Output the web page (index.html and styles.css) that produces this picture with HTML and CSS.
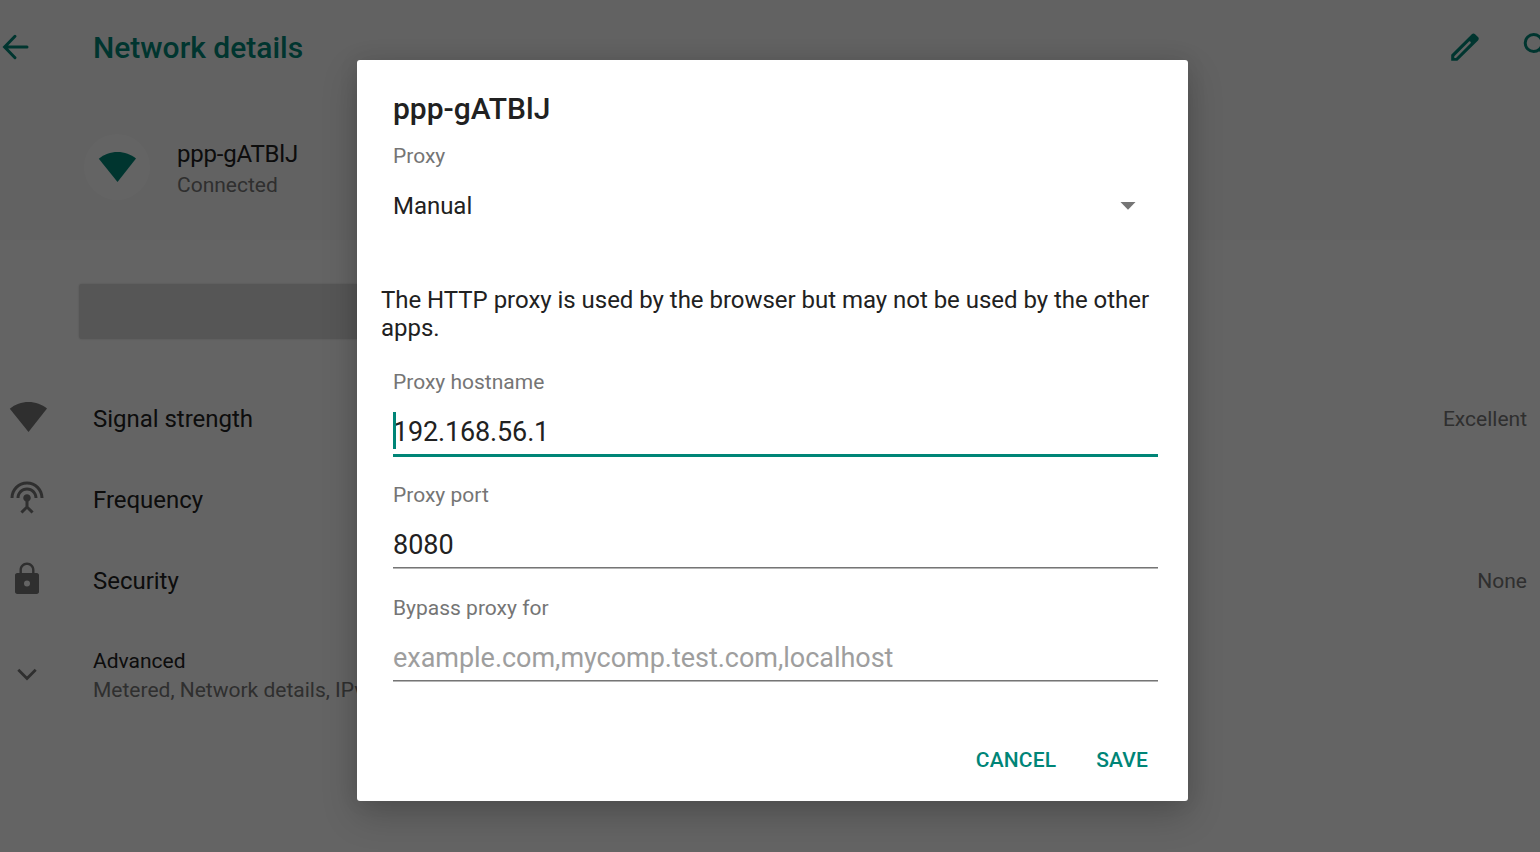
FILE: index.html
```html
<!DOCTYPE html>
<html lang="en">
<head>
<meta charset="utf-8">
<title>Network details</title>
<link rel="stylesheet" href="styles.css">
</head>
<body>
<div class="page">
  <header class="bar">
    <svg class="back" viewBox="0 0 36 36"><path d="M27 18H5M15 7.300L4.600 18 15 28.700" fill="none" stroke="currentColor" stroke-width="3" stroke-linecap="round"/></svg>
    <h1 class="bar-title">Network details</h1>
    <svg class="edit" viewBox="0 0 36 36"><path fill="currentColor" fill-rule="evenodd" d="M4.200 25.800V31.800h6.200L31 11.400c1-1 1-2.300 0-3.300L28.100 5.200c-1-1-2.300-1-3.300 0zM7.300 28.900v-1.700L22 12.600c.9-.9 2.500.7 1.600 1.600L9 28.900z"/></svg>
    <svg class="search" viewBox="0 0 36 36"><circle cx="14.700" cy="14" r="8.500" fill="none" stroke="currentColor" stroke-width="3"/><path d="M20.500 20.500L30 30" stroke="currentColor" stroke-width="3"/></svg>
  </header>
  <section class="hero">
    <div class="badge"><svg class="wifi" viewBox="0 0 38 30"><path fill="currentColor" d="M.8 6.800C6 2.500 12.500.1 19.500.1s13.500 2.400 18.500 6.500L19.500 30z"/></svg></div>
    <div>
      <div class="name">ppp-gATBlJ</div>
      <div class="sub">Connected</div>
    </div>
  </section>
  <main class="content">
    <div class="action"></div>
    <div class="list">
      <div class="row">
        <span class="icon"><svg class="wifi signal" viewBox="0 0 38 30"><path fill="currentColor" d="M.8 6.800C6 2.500 12.500.1 19.500.1s13.500 2.400 18.500 6.500L19.500 30z"/></svg></span>
        <span class="label">Signal strength</span><span class="value">Excellent</span>
      </div>
      <div class="row">
        <span class="icon"><svg class="glyph" viewBox="0 0 24 24"><path fill="currentColor" d="M12 5c-3.870 0-7 3.130-7 7h2c0-2.760 2.240-5 5-5s5 2.240 5 5h2c0-3.870-3.130-7-7-7zm1 9.290c.88-.39 1.500-1.260 1.500-2.290 0-1.380-1.120-2.500-2.500-2.500S9.500 10.620 9.500 12c0 1.020.62 1.900 1.500 2.290v3.300L7.590 21 9 22.410l3-3 3 3L16.410 21 13 17.590v-3.300zM12 1C5.930 1 1 5.930 1 12h2c0-4.970 4.030-9 9-9s9 4.030 9 9h2c0-6.070-4.930-11-11-11z"/></svg></span>
        <span class="label">Frequency</span>
      </div>
      <div class="row">
        <span class="icon"><svg class="glyph" viewBox="0 0 24 24"><path fill="currentColor" fill-rule="evenodd" d="M18.500 8H17V6c0-2.760-2.240-5-5-5S7 3.240 7 6v2H5.500C4.670 8 4 8.670 4 9.500v11c0 .83.67 1.500 1.500 1.500h13c.83 0 1.500-.67 1.500-1.500v-11c0-.83-.67-1.500-1.500-1.500zM12 17a2 2 0 1 1 0-4 2 2 0 0 1 0 4zM8.600 8V6c0-1.880 1.520-3.400 3.400-3.400s3.400 1.520 3.400 3.400v2z"/></svg></span>
        <span class="label">Security</span><span class="value">None</span>
      </div>
      <div class="row advanced">
        <span class="icon"><svg class="chevron" viewBox="0 0 36 36"><path d="M9.300 13.700L18 22.400l8.700-8.700" fill="none" stroke="currentColor" stroke-width="2.800"/></svg></span>
        <div>
          <div class="adv-title">Advanced</div>
          <div class="sub">Metered, Network details, IPv6 details</div>
        </div>
      </div>
    </div>
  </main>
</div>
<div class="scrim"></div>
<div class="dialog" role="dialog">
  <h2 class="dialog-title">ppp-gATBlJ</h2>
  <div class="caption">Proxy</div>
  <div class="select"><span>Manual</span><svg class="caret" viewBox="0 0 16 8"><path d="M.5 0h15L8 7.700z" fill="#757575"/></svg></div>
  <p class="note">The HTTP proxy is used by the browser but may not be used by the other apps.</p>
  <div class="field"><div class="caption">Proxy hostname</div><div class="input focused">192.168.56.1</div></div>
  <div class="field"><div class="caption">Proxy port</div><div class="input">8080</div></div>
  <div class="field"><div class="caption">Bypass proxy for</div><div class="input hint">example.com,mycomp.test.com,localhost</div></div>
  <div class="actions"><span class="button">CANCEL</span><span class="button">SAVE</span></div>
</div>
</body>
</html>
```
FILE: styles.css
```css
* { box-sizing: border-box; }
html, body { margin: 0; height: 100%; overflow: hidden; }
body {
  position: relative;
  font-family: Roboto, "Liberation Sans", sans-serif;
  font-size: 24px;
  letter-spacing: -.03px;
  color: #212121;
}
svg { display: block; flex: none; }
.page { width: 1540px; height: 852px; overflow: hidden; background: #fafafa; }
.bar {
  display: flex;
  align-items: center;
  width: 1590px;
  height: 94px;
  padding-right: 35px;
  background: #f5f5f5;
  color: #008577;
}
.back, .edit, .search { width: 36px; height: 36px; }
.bar-title { flex: 1; margin: 2px 0 0 57px; font-size: 30px; line-height: 36px; font-weight: 500; letter-spacing: 0; }
.search { margin-left: 36px; }
.hero {
  display: flex;
  height: 146px;
  padding: 40px 0 0 84px;
  background: #f5f5f5;
}
.badge {
  display: flex;
  align-items: center;
  justify-content: center;
  width: 66px;
  height: 66px;
  margin-right: 27px;
  border-radius: 50%;
  background: #fafafa;
  color: #008577;
}
.wifi { width: 38px; height: 30px; }
.name { margin-bottom: 1px; padding-top: 5px; line-height: 31px; letter-spacing: -.2px; }
.sub { font-size: 21px; line-height: 29px; letter-spacing: 0; color: #757575; }
.action {
  width: 900px;
  height: 55px;
  margin: 44px 0 0 79px;
  border-radius: 3px;
  background: #d7d7d7;
  box-shadow: 0 0 2px rgba(0, 0, 0, .2);
}
.list { padding-top: 39px; }
.row { display: flex; align-items: center; height: 81px; padding-right: 13px; }
.icon { display: flex; justify-content: center; width: 54px; margin-right: 39px; color: #757575; }
.signal { margin: -4px 0 0 2px; }
.glyph { width: 36px; height: 36px; margin-top: -3px; }
.label { flex: 1; }
.value { font-size: 21px; letter-spacing: 0; color: #757575; }
.advanced { height: 110px; }
.chevron { width: 36px; height: 36px; margin-top: -4px; }
.adv-title { font-size: 21px; line-height: 29px; letter-spacing: 0; }
.scrim { position: absolute; inset: 0; background: rgba(0, 0, 0, .6); }
.dialog {
  position: absolute;
  left: 357px;
  top: 60px;
  width: 831px;
  height: 741px;
  padding: 30px 30px 0 36px;
  border-radius: 3px;
  background: #fff;
  box-shadow: 0 14px 36px rgba(0, 0, 0, .2), 0 0 20px rgba(0, 0, 0, .08);
}
.dialog-title { margin: 0 0 11px; font-size: 30px; line-height: 38px; font-weight: 500; letter-spacing: 0; }
.caption { font-size: 21px; line-height: 34px; letter-spacing: 0; color: #757575; }
.select {
  display: flex;
  align-items: center;
  justify-content: space-between;
  height: 66px;
  padding-right: 22px;
}
.caret { width: 16px; height: 8px; }
.note { margin: 47px 0 23px -12px; line-height: 28px; }
.field { height: 113px; }
.input {
  position: relative;
  height: 56px;
  padding-top: 17px;
  border-bottom: 1px solid #757575;
  box-shadow: 0 1px #b5b5b5;
  font-size: 27px;
  line-height: 32px;
}
.focused { height: 58px; border-bottom: 3px solid #008577; box-shadow: none; letter-spacing: -.15px; }
.focused::before {
  content: "";
  position: absolute;
  left: 0;
  top: 13px;
  width: 3px;
  height: 37px;
  background: #008577;
}
.hint { color: #9e9e9e; }
.actions { display: flex; justify-content: flex-end; gap: 40px; padding: 43px 10px 0 0; }
.button { font-size: 21px; line-height: 26px; font-weight: 500; letter-spacing: .15px; color: #008577; }
```
